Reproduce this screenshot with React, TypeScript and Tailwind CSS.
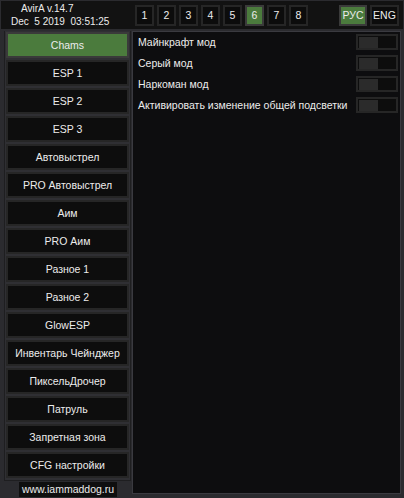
const menu = [
  "Chams",
  "ESP 1",
  "ESP 2",
  "ESP 3",
  "Автовыстрел",
  "PRO Автовыстрел",
  "Аим",
  "PRO Аим",
  "Разное 1",
  "Разное 2",
  "GlowESP",
  "Инвентарь Чейнджер",
  "ПиксельДрочер",
  "Патруль",
  "Запретная зона",
  "CFG настройки",
];

const options = [
  "Майнкрафт мод",
  "Серый мод",
  "Наркоман мод",
  "Активировать изменение общей подсветки",
];

function Toggle() {
  return (
    <div className="shrink-0 w-[42px] h-[16px] border-2 border-[#262626] bg-[#0d0d0d] flex items-center pl-[1px]">
      <div className="w-[19px] h-[11px] bg-[#2b2b2b]" />
    </div>
  );
}

export default function App() {
  return (
    <div
      className="w-[404px] h-[498px] bg-[#2b2b2f] flex flex-col text-[#ececec] text-[10px] leading-none"
      style={{ fontFamily: '"Liberation Sans", Arial, sans-serif' }}
    >
      {/* header */}
      <div className="h-[28px] mx-px mt-px bg-[#121212] flex items-center">
        <div className="w-[134px] pl-[10px] flex flex-col gap-[3px] whitespace-pre text-[10px]">
          <span className="pl-[10px]">AvirA v.14.7</span>
          <span>{"Dec  5 2019  03:51:25"}</span>
        </div>
        <div className="flex gap-[3px] text-[10.5px]">
          {[1, 2, 3, 4, 5, 6, 7, 8].map((n) => (
            <div
              key={n}
              className={
                n === 6
                  ? "w-[19px] h-[21px] border-2 border-[#3a3a3a] bg-[#4b7b3d] flex items-center justify-center"
                  : "w-[19px] h-[21px] border-2 border-[#262626] bg-[#0c0c0c] flex items-center justify-center"
              }
            >
              {n}
            </div>
          ))}
        </div>
        <div className="flex-1" />
        <div className="w-[28px] h-[21px] border-2 border-[#3a3a3a] bg-[#4b7b3d] flex items-center justify-center text-[10.5px]">
          РУС
        </div>
        <div className="ml-[3px] w-[29px] h-[21px] border-2 border-[#262626] bg-[#0c0c0c] flex items-center justify-center text-[10.5px]">
          ENG
        </div>
        <div className="w-[4px]" />
      </div>

      {/* body */}
      <div className="flex-1 flex mt-[2px]">
        <div className="w-[132px] flex flex-col">
          <div className="ml-[4px] mr-px border-x border-b border-[#1e1e20] bg-[#2f2f33] px-px pt-px pb-[2px] flex flex-col gap-[2px]">
            {menu.map((m, i) => (
              <div
                key={m}
                className={
                  i === 0
                    ? "h-[26px] border-2 border-[#3a3a3a] bg-[#4b7b3d] flex items-center justify-center text-[10.5px]"
                    : "h-[26px] border-2 border-[#262626] bg-[#0d0d0d] flex items-center justify-center text-[10.5px]"
                }
              >
                {m}
              </div>
            ))}
          </div>
          <div className="flex-1 flex items-center justify-center pl-[4px]">
            <span className="bg-[#0f0f0f] px-[3px] py-[2px] text-[10.5px]">www.iammaddog.ru</span>
          </div>
        </div>

        <div className="flex-1 mr-[3px] mb-[4px] bg-[#0d0d0f] border border-[#3a3a40] pt-[2px] pl-[5px] pr-[2px] flex flex-col gap-[5px]">
          {options.map((o) => (
            <div key={o} className="flex items-center h-[16px] text-[10.5px] whitespace-nowrap">
              <span>{o}</span>
              <div className="flex-1" />
              <Toggle />
            </div>
          ))}
        </div>
      </div>
    </div>
  );
}
